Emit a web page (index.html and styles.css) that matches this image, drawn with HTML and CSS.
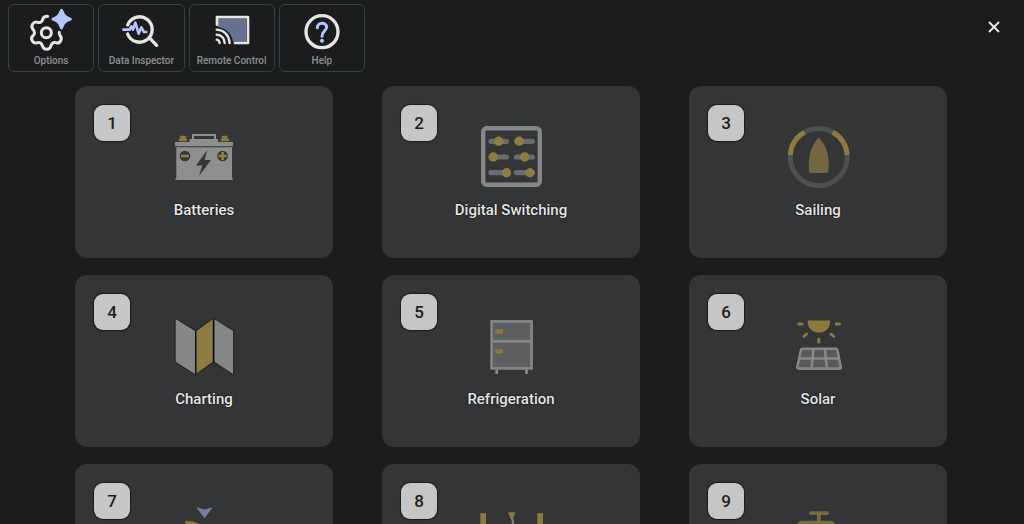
FILE: index.html
```html
<!DOCTYPE html>
<html lang="en">
<head>
<meta charset="utf-8">
<title>Dashboards</title>
<link rel="stylesheet" href="styles.css">
</head>
<body>
<header class="topbar">
  <nav class="tools" aria-label="Tools">
    <button class="tool" type="button">
      <svg class="tool-icon" viewBox="81 24 144 132" aria-hidden="true">
        <g fill="none" stroke="#e6e6e6" stroke-width="9" stroke-linecap="round" stroke-linejoin="round">
          <path d="M143 49C134 49 130 51 128 58C126 66 121 69 114 67C106 65 102 66 98 72C94 79 94 83 99 88C105 94 105 102 99 107C93 112 93 116 97 123C101 130 105 131 113 128C120 126 125 129 127 137C129 145 132 148 140 148C148 148 151 145 153 137C155 129 161 126 167 128C175 131 179 129 182 122C186 115 185 112 180 107C178 104 177 101 178 97"/>
          <circle cx="139" cy="98" r="15"/>
        </g>
        <path d="M185 26Q189 26 191 34Q195 47 207 51Q216 54 216 58Q216 61 207 64Q195 68 191 80Q188 89 184 89Q181 89 178 80Q174 68 163 64Q154 61 154 57Q154 54 163 51Q174 47 178 34Q181 26 185 26Z" fill="#b4c5ff"/>
      </svg>
      <span>Options</span>
    </button>
    <button class="tool" type="button">
      <svg class="tool-icon" viewBox="350 24 144 132" aria-hidden="true">
        <path d="M382 75A38 38 0 1 1 382 102M446 112L469 136" fill="none" stroke="#e6e6e6" stroke-width="10" stroke-linecap="round"/>
        <path d="M366 89H388L393 79L398 89L405 68L415 101L423 82L431 96H441" fill="none" stroke="#b4c5ff" stroke-width="8" stroke-linejoin="round"/>
      </svg>
      <span>Data Inspector</span>
    </button>
    <button class="tool" type="button">
      <svg class="tool-icon" viewBox="82 24 144 132" aria-hidden="true">
        <path d="M112 55H196V125H157Q149 87 112 82Z" fill="#68718f"/>
        <g fill="none" stroke="#e6e6e6" stroke-width="8" stroke-linecap="round" stroke-linejoin="round">
          <path d="M109 74V51H202V129H163"/>
          <path d="M108 89Q143 92 147 129M108 104Q130 106 132 129M108 119Q116 121 117 129" stroke-width="7"/>
        </g>
      </svg>
      <span>Remote Control</span>
    </button>
    <button class="tool" type="button">
      <svg class="tool-icon" viewBox="353 24 144 132" aria-hidden="true">
        <circle cx="425" cy="95" r="48" fill="none" stroke="#e6e6e6" stroke-width="10"/>
        <path d="M411 83C411 66 439 66 439 81C439 92 425 93 425 109" fill="none" stroke="#b4c5ff" stroke-width="9" stroke-linecap="round"/>
        <circle cx="425" cy="122" r="6" fill="#b4c5ff"/>
      </svg>
      <span>Help</span>
    </button>
  </nav>
  <button class="close" type="button" aria-label="Close">
    <svg viewBox="0 0 12 12" aria-hidden="true"><path d="M1 1L11 11M11 1L1 11" fill="none" stroke="#e8eeee" stroke-width="1.800"/></svg>
  </button>
</header>
<main class="grid">
  <button class="card" type="button">
    <span class="badge">1</span>
    <svg class="card-icon" viewBox="0 0 64 64" aria-hidden="true">
      <path d="M21 14V10H43V14" fill="none" stroke="#8c8f8e" stroke-width="2"/>
      <path d="M17.500 17V14H46V17H61V21.300H3V17ZM4.300 22.300H60V52.500L61 55H3L4.300 52.500Z" fill="#8c8f8e"/>
      <path d="M8.300 11H13.700V14H15V16H7V14H8.300ZM50 11H55.300V14H57V16H49V14H50Z" fill="#8d7b3e" stroke="#8d7b3e" stroke-width=".5"/>
      <circle cx="13" cy="31" r="5.300" fill="#343536"/><circle cx="50.600" cy="31" r="5.300" fill="#343536"/>
      <path d="M9 31H17M46.600 31H54.600M50.600 27V35" stroke="#99843d" stroke-width="2.500"/>
      <path d="M35.300 25L24 40.500H30.300L27 51L39 35H32.700Z" fill="#343536"/>
    </svg>
    <span class="label">Batteries</span>
  </button>
  <button class="card" type="button">
    <span class="badge">2</span>
    <svg class="card-icon" viewBox="0 0 64 64" aria-hidden="true">
      <rect x="4.200" y="3.200" width="56.600" height="56.600" rx="3.500" fill="none" stroke="#858888" stroke-width="4.400"/>
      <path d="M12 16.300H27.500M37.500 16.300H53.500M12 32H27.500M37.500 32H53.500M12 47.700H27.500M37.500 47.700H53.500" stroke="#696c6e" stroke-width="5.200" stroke-linecap="round"/>
      <g fill="#8f7d40"><circle cx="19.700" cy="16.300" r="4.700"/><circle cx="40.300" cy="16.300" r="4.700"/><circle cx="14.300" cy="32" r="4.700"/><circle cx="45.700" cy="32" r="4.700"/><circle cx="27.500" cy="47.700" r="4.700"/><circle cx="51" cy="47.700" r="4.700"/></g>
    </svg>
    <span class="label">Digital Switching</span>
  </button>
  <button class="card" type="button">
    <span class="badge">3</span>
    <svg class="card-icon" viewBox="0 0 64 64" aria-hidden="true">
      <g fill="none" stroke-width="5">
        <circle cx="32.700" cy="32" r="28.500" stroke="#4e4f51"/>
        <path d="M4.300 30A28.500 28.500 0 0 1 18.600 7.200M46.800 7.200A28.500 28.500 0 0 1 61.100 30" stroke="#8d7b3e"/>
      </g>
      <path d="M32.700 12.700C40 19 44.500 32 42 48H23.500C21 32 25.500 19 32.700 12.700Z" fill="#736740"/>
    </svg>
    <span class="label">Sailing</span>
  </button>
  <button class="card" type="button">
    <span class="badge">4</span>
    <svg class="card-icon" viewBox="0 0 64 64" aria-hidden="true">
      <g stroke="#242628" stroke-width="2.500" stroke-linejoin="round" fill="#242628"><path d="M3.700 5L23.500 17L42 5L61 17V60L42 47.700L23.500 60L3.700 47.700Z"/></g>
      <path d="M23.600 17V60M41.600 5V48" stroke="#0c1019" stroke-width="1.500"/>
      <path d="M3.700 5L23 17V60L3.700 47.700ZM42.600 5.300L61 17V60L42.600 47.700Z" fill="#858887"/>
      <path d="M24.500 17L40.700 5.300V47.700L24.500 59.500Z" fill="#8d7b40"/>
    </svg>
    <span class="label">Charting</span>
  </button>
  <button class="card" type="button">
    <span class="badge">5</span>
    <svg class="card-icon" viewBox="0 0 64 64" aria-hidden="true">
      <path d="M17.700 55V60M47.500 55V60" stroke="#858788" stroke-width="2.700"/>
      <rect x="12.600" y="7.400" width="40" height="47" fill="#5d5f60" stroke="#858788" stroke-width="2.600"/>
      <path d="M12 27.400H53" stroke="#858788" stroke-width="2.600"/>
      <path d="M16.300 15.300H24V19.700H16.300ZM16.300 35.300H24V39.500H16.300Z" fill="#8d7b3e"/>
    </svg>
    <span class="label">Refrigeration</span>
  </button>
  <button class="card" type="button">
    <span class="badge">6</span>
    <svg class="card-icon" viewBox="0 0 64 64" aria-hidden="true">
      <path d="M21.700 6.500H44C44.500 14 39.500 18.700 33 18.700S21.200 14 21.700 6.500Z" fill="#8d7b3e"/>
      <path d="M12.800 10H16M50.300 10H53.500M20.500 20L18 22.500M45 20L47.700 22.500M32.800 25V28" stroke="#8d7b3e" stroke-width="3" stroke-linecap="round"/>
      <g fill="#57595b" stroke="#858788" stroke-width="2.600" stroke-linejoin="round"><path d="M17 34.700H49.500Q51 34.700 51.300 36L54.800 53Q55 54.600 53.500 54.600H12.800Q11 54.600 11.300 53L15 36Q15.300 34.700 17 34.700Z"/><path d="M27.500 35L25.500 54.500M38.800 35L41 54.500M13 44.500H53"/></g>
    </svg>
    <span class="label">Solar</span>
  </button>
  <button class="card" type="button" aria-label="Dashboard 7">
    <span class="badge">7</span>
    <svg class="card-icon" viewBox="0 0 64 64" aria-hidden="true">
      <path d="M24.300 4.300L32.600 6.500L40.700 4.300L32.600 15.300Z" fill="#747da0"/>
      <path d="M13.300 18Q21 17.500 28 21V24H13.300Z" fill="#8d7b3e"/>
    </svg>
  </button>
  <button class="card" type="button" aria-label="Dashboard 8">
    <span class="badge">8</span>
    <svg class="card-icon" viewBox="0 0 64 64" aria-hidden="true">
      <path d="M33 15L35 24" stroke="#858788" stroke-width="2"/>
      <path d="M1.300 10.300H7V24H1.300ZM58.300 10.300H64V24H58.300ZM29 9.300H36.300L33.800 16.300H31.800Z" fill="#8d7b3e"/>
    </svg>
  </button>
  <button class="card" type="button" aria-label="Dashboard 9">
    <span class="badge">9</span>
    <svg class="card-icon" viewBox="0 0 64 64" aria-hidden="true">
      <path d="M25 10.200H41" stroke="#786b40" stroke-width="3.800" stroke-linecap="round"/>
      <path d="M31 10H34.700V17.700H44Q47 17.700 49 21V24H11.700V21Q13 17.700 16 17.700H31Z" fill="#786b40"/>
    </svg>
  </button>
</main>
</body>
</html>
```
FILE: styles.css
```css
* {
  box-sizing: border-box;
}

body {
  margin: 0;
  height: 100vh;
  overflow: hidden;
  background: #1b1c1e;
  color: #e6e6e6;
  font-family: Roboto, "Liberation Sans", sans-serif;
}

button {
  margin: 0;
  padding: 0;
  border: 0;
  background: none;
  color: inherit;
  font: inherit;
  cursor: pointer;
}

.topbar {
  display: flex;
  justify-content: space-between;
  align-items: flex-start;
  padding: 4px 18px 14px 8px;
}

.tools {
  display: grid;
  grid-template-columns: repeat(4, 1fr);
  gap: 4px;
  width: 357px;
}

.tool {
  display: flex;
  flex-direction: column;
  align-items: center;
  height: 68px;
  padding-top: 3px;
  border: 1px solid #393f40;
  border-radius: 6px;
  color: #8b9191;
  font-size: 10px;
  font-weight: 500;
  line-height: 18px;
}

.tool-icon {
  width: 48px;
  height: 44px;
}

.close {
  display: grid;
  place-items: center;
  width: 24px;
  height: 24px;
  margin-top: 11px;
}

.close svg {
  width: 12px;
  height: 12px;
}

.grid {
  display: grid;
  grid-template-columns: repeat(3, 1fr);
  gap: 17px 49px;
  padding: 0 77px 17px 75px;
}

.card {
  position: relative;
  display: flex;
  flex-direction: column;
  align-items: center;
  gap: 8px;
  height: 172px;
  padding-top: 39px;
  border-radius: 12px;
  background: #343536;
}

.badge {
  position: absolute;
  top: 19px;
  left: 19px;
  width: 36px;
  height: 36px;
  border-radius: 9px;
  background: #c6c6c6;
  box-shadow: 0 0 1px 1px #1b1c1e;
  color: #1b1c1e;
  font-size: 17px;
  font-weight: 500;
  line-height: 36px;
}

.card-icon {
  width: 64px;
  height: 64px;
}

.label {
  font-size: 15px;
  font-weight: 500;
  line-height: 26px;
  text-shadow: 0 0 2px #000;
}
```
